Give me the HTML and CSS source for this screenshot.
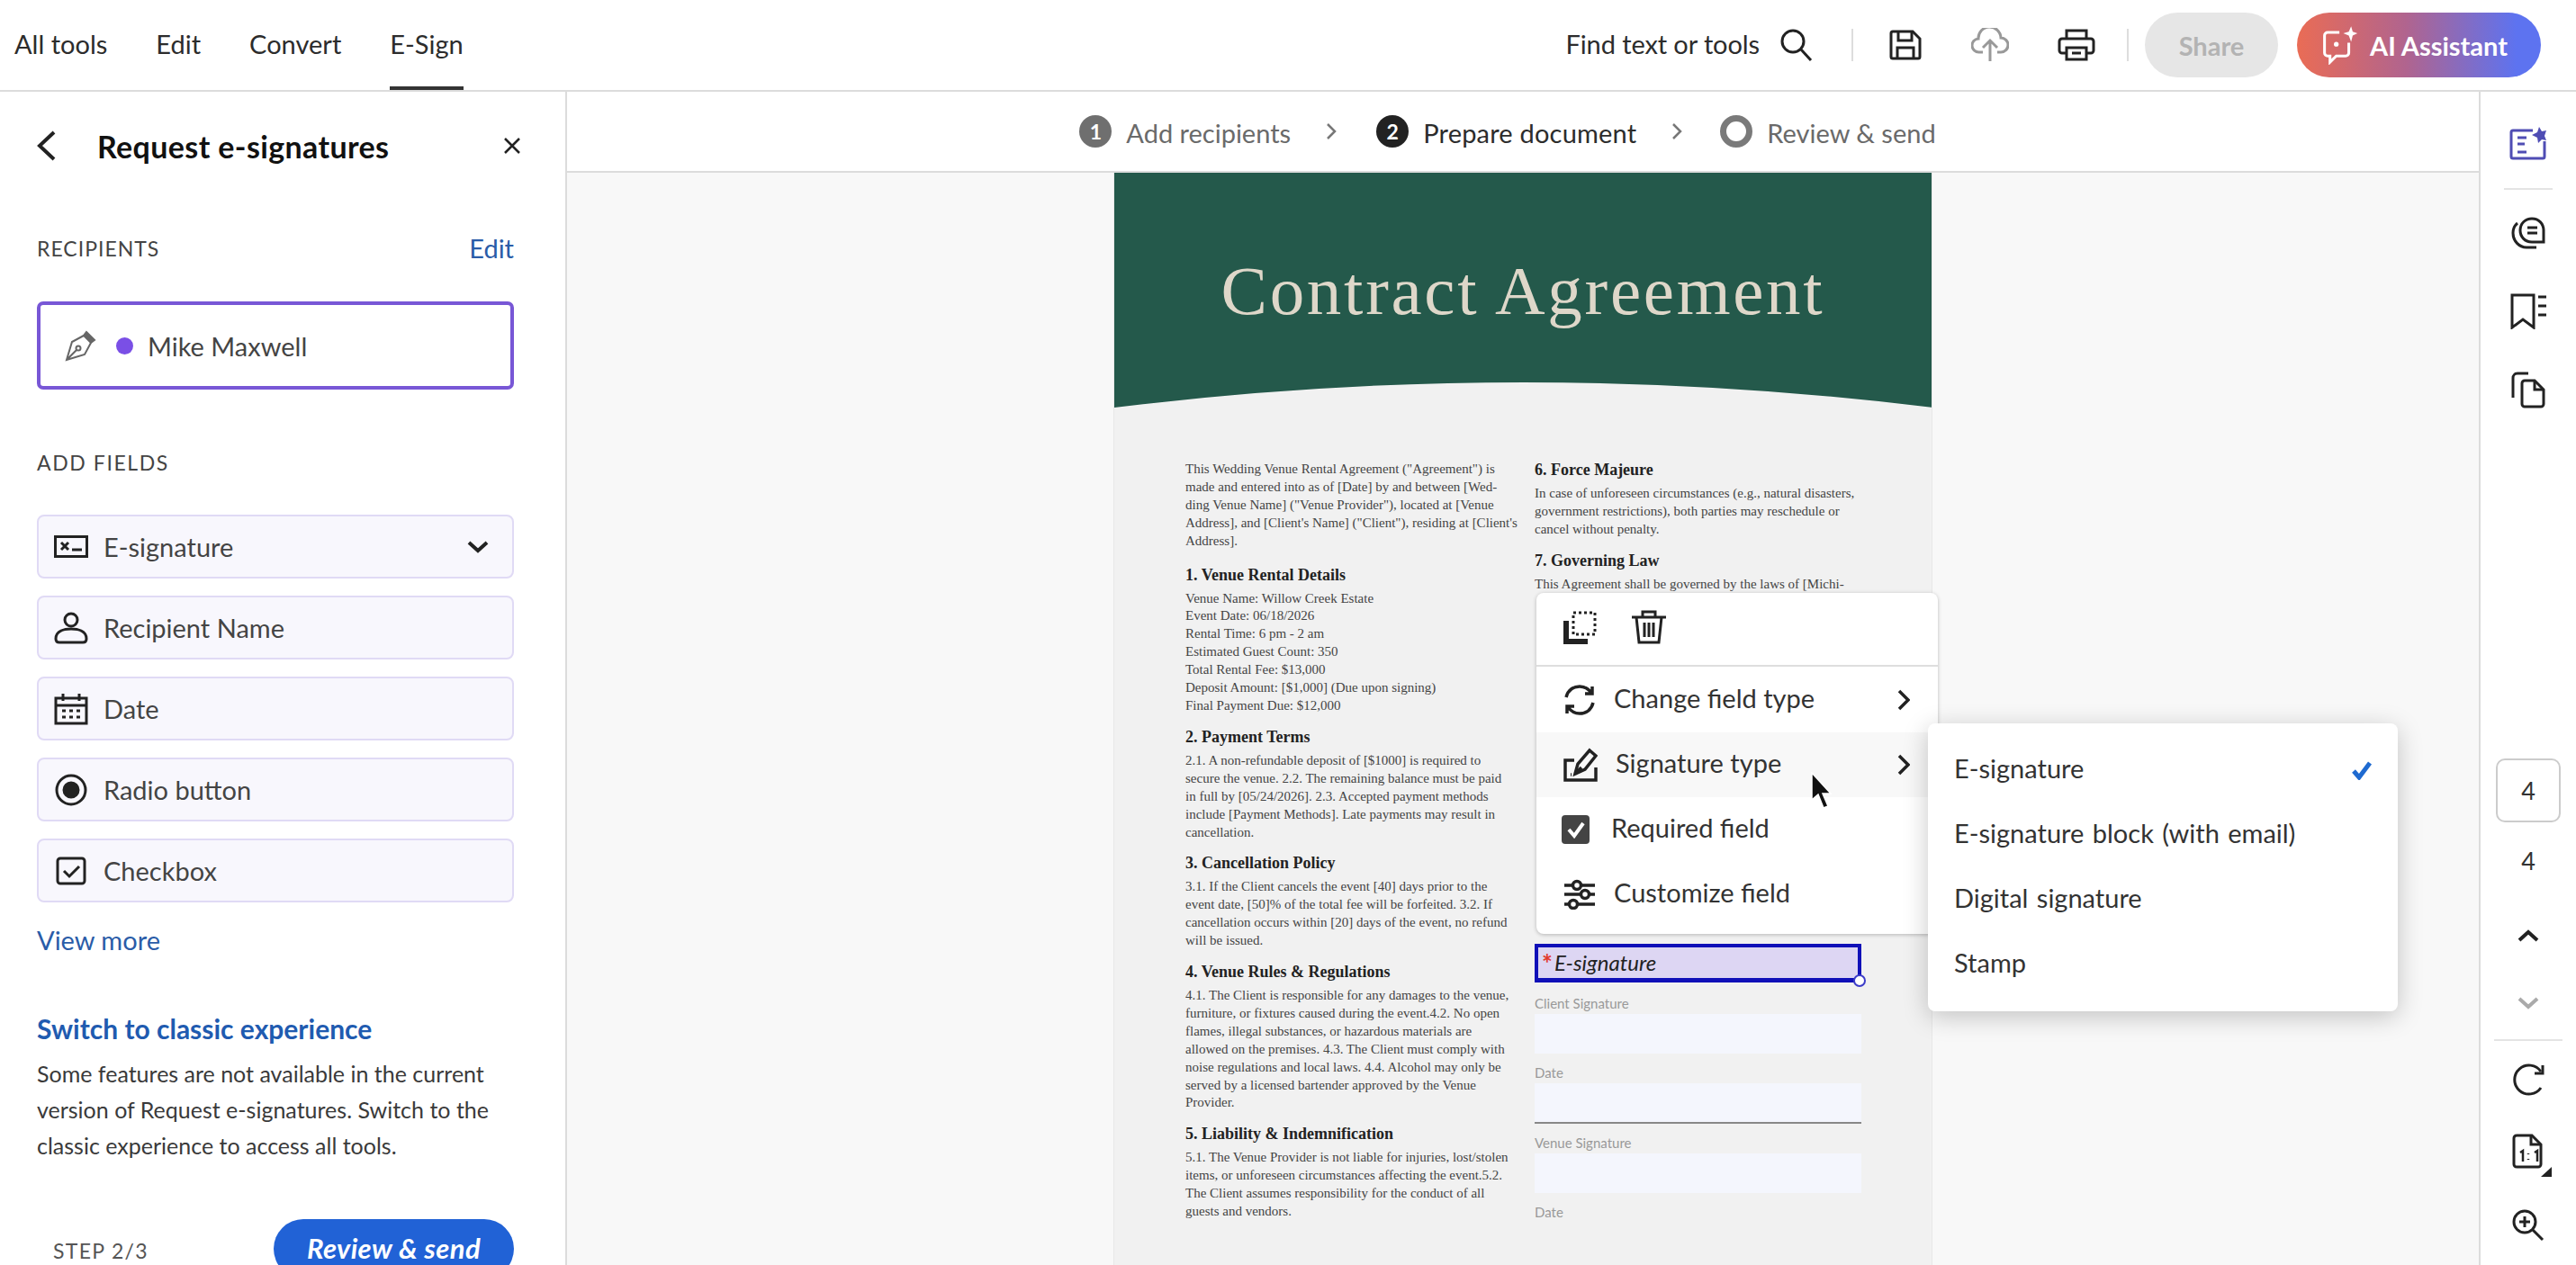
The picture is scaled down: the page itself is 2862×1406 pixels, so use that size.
FILE: index.html
```html
<!DOCTYPE html>
<html lang="en">

<head>
  <meta charset="UTF-8">
  <title>Request e-signatures</title>
  <link rel="stylesheet" href="styles.css">
</head>

<body>
  <!-- Top bar -->
  <header class="topbar">
    <nav class="tabs">
      <a class="tab">All tools</a>
      <a class="tab">Edit</a>
      <a class="tab">Convert</a>
      <a class="tab active">E-Sign</a>
    </nav>
    <div class="actions">
      <span class="find">Find text or tools</span>
      <svg class="ico-search" width="38" height="36" viewBox="0 0 38 36"><circle cx="15" cy="14" r="12"/><path d="M24 23l11 12"/></svg>
      <span class="sep sep-a"></span>
      <svg class="ico-save" width="36" height="34" viewBox="0 0 36 34"><path d="M2 4a2 2 0 0 1 2-2h22l8 8v20a2 2 0 0 1-2 2H4a2 2 0 0 1-2-2z"/><path d="M10 2v10h15V2M9 32V20h18v12"/></svg>
      <svg class="ico-cloud" width="42" height="38" viewBox="0 0 42 38"><path d="M13 27H9a7.500 7.500 0 0 1-1-15 12.500 12.500 0 0 1 25-1 8 8 0 0 1 0 16h-4"/><path d="M21 37V15M13 22l8-8 8 8"/></svg>
      <svg class="ico-print" width="42" height="36" viewBox="0 0 42 36"><path d="M10 11V2h22v9M10 27H5a3 3 0 0 1-3-3V14a3 3 0 0 1 3-3h32a3 3 0 0 1 3 3v10a3 3 0 0 1-3 3h-5"/><path d="M10 21h22v13H10z"/><path d="M16 27h10"/></svg>
      <span class="sep sep-b"></span>
      <button class="btn-share">Share</button>
      <button class="btn-ai">
        <svg width="40" height="44" viewBox="0 0 46 50"><path d="M22 9H7a4 4 0 0 0-4 4v22a4 4 0 0 0 4 4h3v8l8-8h12a4 4 0 0 0 4-4V22"/><circle cx="18" cy="24" r="3" fill="#fff" stroke="none"/><path class="spark" d="M37 1l2 7 6 2-6 3-2 8-3-8-7-3 7-2z"/></svg>
        AI Assistant
      </button>
    </div>
  </header>

  <div class="workspace">
    <!-- Left panel -->
    <aside class="panel">
      <div class="panel-head">
        <svg class="ico-back" width="22" height="36" viewBox="0 0 22 36"><path d="M19 3L3 18l16 15"/></svg>
        <h2>Request e-signatures</h2>
        <svg class="ico-close" width="20" height="20" viewBox="0 0 20 20"><path d="M2 2l16 16M18 2L2 18"/></svg>
      </div>

      <div class="label-row">
        <span class="label">RECIPIENTS</span>
        <a class="link edit">Edit</a>
      </div>
      <div class="recipient">
        <svg width="36" height="36" viewBox="0 0 36 36"><path d="M24 3l9 9-4 3-8-8z" fill="#666"/><path d="M21 7L8 14 2 34l20-6 7-13M2 34l11-11"/><circle cx="15" cy="21" r="2.500"/></svg>
        <span class="dot"></span>
        <span>Mike Maxwell</span>
      </div>

      <div class="label label-fields">ADD FIELDS</div>
      <ul class="fields">
        <li>
          <svg width="38" height="26" viewBox="0 0 38 26"><path d="M1.500 1.500h35v22h-35z"/><path d="M8 8l8 8M16 8l-8 8M20 16h11"/></svg>
          E-signature
          <svg class="field-chevron" width="24" height="14" viewBox="0 0 24 14"><path d="M2 2l10 9 10-9"/></svg>
        </li>
        <li>
          <svg width="38" height="36" viewBox="0 0 38 36"><circle cx="19" cy="9" r="7"/><path d="M2 30c0-9 10-11 17-11s17 2 17 11c0 3-2 4-4 4H6c-2 0-4-1-4-4z"/></svg>
          Recipient Name
        </li>
        <li>
          <svg width="38" height="36" viewBox="0 0 38 36"><path d="M2 6h34v28H2zM2 14h34M10 1v8M28 1v8"/><path class="dots" d="M9 20h4M17 20h4M25 20h4M9 27h4M17 27h4M25 27h4"/></svg>
          Date
        </li>
        <li>
          <svg width="38" height="36" viewBox="0 0 38 36"><circle cx="19" cy="18" r="16"/><circle cx="19" cy="18" r="8" fill="#222"/></svg>
          Radio button
        </li>
        <li>
          <svg width="38" height="32" viewBox="0 0 38 32"><rect x="4" y="2" width="30" height="28" rx="3"/><path d="M11 16l6 6 11-11"/></svg>
          Checkbox
        </li>
      </ul>
      <a class="link view-more">View more</a>

      <a class="link switch">Switch to classic experience</a>
      <p class="switch-text">Some features are not available in the current<br>version of Request e-signatures. Switch to the<br>classic experience to access all tools.</p>

      <div class="panel-foot">
        <span class="step">STEP 2/3</span>
        <button class="btn-review">Review &amp; send</button>
      </div>
    </aside>

    <main class="main">
      <!-- Steps -->
      <div class="steps">
        <span class="num">1</span><span class="step-name">Add recipients</span>
        <svg class="step-chev chev-first" width="12" height="20" viewBox="0 0 12 20"><path d="M2 2l8 8-8 8"/></svg>
        <span class="num current">2</span><span class="step-name current">Prepare document</span>
        <svg class="step-chev" width="12" height="20" viewBox="0 0 12 20"><path d="M2 2l8 8-8 8"/></svg>
        <span class="ring"></span><span class="step-name">Review &amp; send</span>
      </div>

      <div class="canvas">
        <article class="doc">
          <div class="doc-head"><h1>Contract Agreement</h1></div>
          <div class="doc-body">
            <div class="col">
              <p class="intro">This Wedding Venue Rental Agreement ("Agreement") is<br>made and entered into as of [Date] by and between [Wed-<br>ding Venue Name] ("Venue Provider"), located at [Venue<br>Address], and [Client's Name] ("Client"), residing at [Client's<br>Address].</p>
              <h3>1. Venue Rental Details</h3>
              <p>Venue Name: Willow Creek Estate<br>Event Date: 06/18/2026<br>Rental Time: 6 pm - 2 am<br>Estimated Guest Count: 350<br>Total Rental Fee: $13,000<br>Deposit Amount: [$1,000] (Due upon signing)<br>Final Payment Due: $12,000</p>
              <h3>2. Payment Terms</h3>
              <p>2.1. A non-refundable deposit of [$1000] is required to<br>secure the venue. 2.2. The remaining balance must be paid<br>in full by [05/24/2026]. 2.3. Accepted payment methods<br>include [Payment Methods]. Late payments may result in<br>cancellation.</p>
              <h3>3. Cancellation Policy</h3>
              <p>3.1. If the Client cancels the event [40] days prior to the<br>event date, [50]% of the total fee will be forfeited. 3.2. If<br>cancellation occurs within [20] days of the event, no refund<br>will be issued.</p>
              <h3>4. Venue Rules &amp; Regulations</h3>
              <p>4.1. The Client is responsible for any damages to the venue,<br>furniture, or fixtures caused during the event.4.2. No open<br>flames, illegal substances, or hazardous materials are<br>allowed on the premises. 4.3. The Client must comply with<br>noise regulations and local laws. 4.4. Alcohol may only be<br>served by a licensed bartender approved by the Venue<br>Provider.</p>
              <h3>5. Liability &amp; Indemnification</h3>
              <p>5.1. The Venue Provider is not liable for injuries, lost/stolen<br>items, or unforeseen circumstances affecting the event.5.2.<br>The Client assumes responsibility for the conduct of all<br>guests and vendors.</p>
            </div>
            <div class="col col-right">
              <h3 class="first">6. Force Majeure</h3>
              <p>In case of unforeseen circumstances (e.g., natural disasters,<br>government restrictions), both parties may reschedule or<br>cancel without penalty.</p>
              <h3>7. Governing Law</h3>
              <p>This Agreement shall be governed by the laws of [Michi-</p>

              <div class="sign-field"><span class="req">*</span>E-signature<span class="handle"></span></div>
              <div class="sign-label first-label">Client Signature</div>
              <div class="sign-input"></div>
              <div class="sign-label">Date</div>
              <div class="sign-input lined"></div>
              <div class="sign-label">Venue Signature</div>
              <div class="sign-input"></div>
              <div class="sign-label">Date</div>
            </div>
          </div>
        </article>

        <!-- Field context menu -->
        <div class="menu">
          <div class="menu-tools">
            <svg width="38" height="38" viewBox="0 0 38 38"><path class="thick" d="M4 12v23h24"/><path class="dashed" d="M12 3h24v24H12z"/></svg>
            <svg width="42" height="38" viewBox="0 0 42 38"><path d="M2 8h38M14 8V2h14v6M7 8l3 28h22l3-28M16 14v16M21 14v16M26 14v16"/></svg>
          </div>
          <div class="menu-list">
            <div class="menu-item">
              <svg width="36" height="34" viewBox="0 0 36 34"><path d="M3 14C5 6 11 2 18 2c6 0 10 3 13 7M32 2v8h-8M33 20c-2 8-8 12-15 12-6 0-10-3-13-7M4 32v-8h8"/></svg>
              <span class="menu-text">Change field type</span>
              <svg class="menu-chev" width="14" height="24" viewBox="0 0 14 24"><path d="M2 2l10 10L2 22"/></svg>
            </div>
            <div class="menu-item hover">
              <svg width="38" height="38" viewBox="0 0 38 38"><path d="M12 14H2v22h34V22"/><path d="M13 29l3-11L29 3l7 6-12 15z"/><path d="M13 29l7-7M8 30h1"/></svg>
              <span class="menu-text">Signature type</span>
              <svg class="menu-chev" width="14" height="24" viewBox="0 0 14 24"><path d="M2 2l10 10L2 22"/></svg>
            </div>
            <div class="menu-item check-item">
              <span class="check-box"><svg width="22" height="20" viewBox="0 0 22 20"><path d="M3 10l6 7L19 3"/></svg></span>
              <span class="menu-text">Required field</span>
            </div>
            <div class="menu-item">
              <svg width="36" height="34" viewBox="0 0 36 34"><path d="M1 7h9M20 7h15M1 17h18M29 17h6M1 28h5M16 28h19"/><circle cx="15" cy="7" r="4.500"/><circle cx="24" cy="17" r="4.500"/><circle cx="11" cy="28" r="4.500"/></svg>
              <span class="menu-text">Customize field</span>
            </div>
          </div>
        </div>

        <div class="submenu">
          <div class="sub-item"><span class="menu-text">E-signature</span><svg width="24" height="22" viewBox="0 0 24 22"><path d="M3 12l6 7L21 3"/></svg></div>
          <div class="sub-item"><span class="menu-text">E-signature block (with email)</span></div>
          <div class="sub-item"><span class="menu-text">Digital signature</span></div>
          <div class="sub-item"><span class="menu-text">Stamp</span></div>
        </div>

        <svg class="cursor" width="24" height="42" viewBox="0 0 24 42"><path d="M1 1v30l7-6 6 15 5-2-6-14h9z"/></svg>
      </div>
    </main>

    <!-- Right rail -->
    <aside class="rail">
      <svg class="r-ai" width="42" height="38" viewBox="0 0 42 38"><path d="M26 5H4a2 2 0 0 0-2 2v27a2 2 0 0 0 2 2h33a2 2 0 0 0 2-2V17"/><path d="M9 13h10M9 20h8M9 29h10"/><path class="spark" d="M33 1l3 5 5-1-2 6 2 5-5-1-4 4-1-6-6-3 6-3z"/></svg>
      <span class="rail-line top-line"></span>
      <svg class="r-comments" width="38" height="36" viewBox="0 0 38 36"><path d="M10 15c0-8 6-13 13-13 8 0 13 6 13 13v13H23c-8 0-13-6-13-13zM18 12h11M18 18h11"/><path d="M7 7C3 10 2 14 2 18c0 9 7 16 15 16h11"/></svg>
      <svg class="r-bookmark" width="42" height="40" viewBox="0 0 42 40"><path d="M3 2h24v36L15 29 3 38z"/><path d="M32 4h9M32 14h9M32 24h9"/></svg>
      <svg class="r-pages" width="38" height="41" viewBox="0 0 38 41"><path d="M19 2H7a5 5 0 0 0-5 5v22"/><path d="M12 13a3 3 0 0 1 3-3h11l10 10v16a3 3 0 0 1-3 3H15a3 3 0 0 1-3-3z"/><path d="M26 10v10h10"/></svg>
      <div class="page-box">4</div>
      <div class="page-total">4</div>
      <svg class="r-up" width="24" height="16" viewBox="0 0 24 16"><path d="M2 13L12 4l10 9"/></svg>
      <svg class="r-down" width="24" height="16" viewBox="0 0 24 16"><path d="M2 3l10 9 10-9"/></svg>
      <span class="rail-line bottom-line"></span>
      <svg class="r-rotate" width="36" height="36" viewBox="0 0 36 36"><path d="M32 27a16 16 0 1 1 0-18"/><path d="M34 2v9h-9"/></svg>
      <div class="r-fit">
        <svg width="46" height="48" viewBox="0 0 46 48"><path d="M5 2h17l10 10v22a3 3 0 0 1-3 3H5a3 3 0 0 1-3-3V5a3 3 0 0 1 3-3z"/><path d="M21 2v10h10"/><path class="fit-txt" d="M9 21l3-2v12M25 21l3-2v12M18 22v1M18 28v1"/><path class="tri" d="M44 37v11H32z"/></svg>
      </div>
      <svg class="r-zoom" width="36" height="36" viewBox="0 0 36 36"><circle cx="14" cy="14" r="12"/><path d="M8 14h12M14 8v12M23 23l11 11"/></svg>
    </aside>
  </div>
</body>

</html>
```
FILE: styles.css
```css
* {
  margin: 0;
  padding: 0;
  box-sizing: border-box;
}

html,
body {
  width: 2862px;
  height: 1406px;
  overflow: hidden;
}

body {
  font-family: 'Lato', 'Open Sans', sans-serif;
  font-size: 29px;
  color: #333;
  background: #fff;
}

svg {
  fill: none;
  stroke: #222;
  stroke-width: 3;
  flex-shrink: 0;
}

button {
  border: none;
  font-family: inherit;
}

/* Top bar */
.topbar {
  height: 102px;
  display: flex;
  align-items: center;
  justify-content: space-between;
  border-bottom: 2px solid #dcdcdc;
  padding: 0 39px 0 16px;
}

.tabs {
  display: flex;
  gap: 54px;
  height: 100px;
}

.tab {
  display: flex;
  align-items: center;
  color: #2c2c2c;
  font-size: 29px;
  border-bottom: 4px solid transparent;
}

.tab.active {
  border-bottom-color: #333;
}

.actions {
  display: flex;
  align-items: center;
}

.find {
  color: #2c2c2c;
  margin-right: 22px;
  padding-bottom: 3px;
  letter-spacing: -0.100px;
}

.sep {
  width: 2px;
  height: 36px;
  background: #ddd;
}

.sep-a {
  margin: 0 40px 0 42px;
}

.sep-b {
  margin: 0 18px 0 35px;
}

.ico-cloud {
  stroke: #999;
  margin: 0 54px 0 55px;
}

.btn-share,
.btn-ai {
  height: 72px;
  border-radius: 36px;
  font-size: 29px;
  font-weight: 700;
}

.btn-share {
  width: 148px;
  background: #e6e6e6;
  color: #b3b3b3;
}

.btn-ai {
  width: 271px;
  margin-left: 21px;
  display: flex;
  align-items: center;
  padding-left: 28px;
  gap: 13px;
  color: #fff;
  background: linear-gradient(90deg, #ea6c55 0%, #b0648f 45%, #5d73f0 90%);
}

.btn-ai svg {
  stroke: #fff;
  stroke-width: 3.500;
}

.spark {
  fill: currentColor;
  stroke: none;
}

.btn-ai .spark {
  fill: #fff;
  stroke: none;
}

/* Layout */
.workspace {
  display: flex;
  height: 1304px;
}

.panel {
  width: 630px;
  flex-shrink: 0;
  border-right: 2px solid #dcdcdc;
  padding: 0 57px 0 41px;
  overflow: hidden;
}

.panel-head {
  height: 120px;
  display: flex;
  align-items: center;
}

.panel-head h2 {
  font-size: 34px;
  font-weight: 700;
  letter-spacing: 0.370px;
  color: #111;
  margin-left: 45px;
}

.ico-back {
  stroke-width: 4;
}

.ico-close {
  margin-left: auto;
  margin-right: -8px;
  stroke-width: 2.500;
}

.label-row {
  display: flex;
  justify-content: space-between;
  align-items: center;
  height: 36px;
  margin-top: 36px;
  margin-bottom: 41px;
}

.label {
  font-size: 23px;
  letter-spacing: 1px;
  color: #444;
}

.link {
  color: #2a5ca8;
}

.edit {
  padding-bottom: 2px;
}

.recipient {
  height: 98px;
  border: 4px solid #7857d6;
  border-radius: 7px;
  display: flex;
  align-items: center;
  padding-left: 27px;
  color: #444;
}

.recipient svg {
  stroke: #666;
  stroke-width: 2;
}

.dot {
  width: 19px;
  height: 19px;
  border-radius: 50%;
  background: #7a4fe6;
  margin: 0 16px 0 21px;
}

.label-fields {
  height: 30px;
  line-height: 30px;
  margin-top: 66px;
  letter-spacing: 1.600px;
}

.fields {
  list-style: none;
  margin-top: 43px;
  display: flex;
  flex-direction: column;
  gap: 19px;
}

.fields li {
  height: 71px;
  display: flex;
  align-items: center;
  gap: 17px;
  padding-left: 17px;
  padding-right: 26px;
  background: #f8f7fd;
  border: 2px solid #e0daf5;
  border-radius: 8px;
  color: #444;
}

.fields svg {
  stroke-width: 3;
}

.fields .field-chevron {
  margin-left: auto;
  stroke-width: 4;
}

.dots {
  stroke-width: 3;
}

.view-more {
  display: block;
  height: 40px;
  line-height: 40px;
  margin-top: 22px;
}

.switch {
  display: block;
  height: 40px;
  line-height: 40px;
  margin-top: 58px;
  font-size: 30px;
  font-weight: 700;
  color: #1f5bb0;
}

.switch-text {
  margin-top: 10px;
  font-size: 25px;
  line-height: 40px;
  white-space: nowrap;
  color: #3a3a3a;
}

.panel-foot {
  display: flex;
  justify-content: space-between;
  align-items: center;
  margin-top: 62px;
  padding-left: 18px;
}

.step {
  font-size: 23px;
  letter-spacing: 1.300px;
  color: #555;
  padding-top: 4px;
}

.btn-review {
  width: 267px;
  height: 66px;
  border-radius: 33px;
  background: #2162d6;
  color: #fff;
  font-size: 31px;
  letter-spacing: 0.400px;
  font-weight: 700;
  font-style: italic;
  padding-bottom: 3px;
}

/* Steps */
.main {
  flex: 1;
  min-width: 0;
  display: flex;
  flex-direction: column;
}

.steps {
  height: 90px;
  flex-shrink: 0;
  display: flex;
  align-items: center;
  justify-content: center;
  padding-right: 34px;
  border-bottom: 2px solid #dcdcdc;
  color: #6a6a6a;
}

.num,
.ring {
  width: 36px;
  height: 36px;
  border-radius: 50%;
  display: flex;
  align-items: center;
  justify-content: center;
  font-size: 23px;
  font-weight: 700;
  color: #fff;
  background: #6f6f6f;
}

.num.current {
  background: #222;
}

.ring {
  background: none;
  border: 7px solid #7a7a7a;
}

.step-name {
  margin-left: 16px;
  padding-top: 2px;
}

.step-name.current {
  color: #2c2c2c;
  letter-spacing: 0.200px;
}

.step-chev {
  stroke: #777;
  stroke-width: 2.500;
  margin: 0 42px 0 39px;
}

.step-chev.chev-first {
  margin-right: 44px;
}

/* Document */
.canvas {
  flex: 1;
  position: relative;
  background: #f8f8f8;
  overflow: hidden;
  display: flex;
  justify-content: center;
}

.doc {
  width: 910px;
  height: 1300px;
  background: #f1f1f1;
  font-family: 'Liberation Serif', serif;
  border-left: 1px solid #e8e8e8;
  border-right: 1px solid #e8e8e8;
}

.doc-head {
  height: 261px;
  background: #24594b;
  clip-path: path('M0 0H910V261Q455 205 0 261Z');
  display: flex;
  justify-content: center;
  padding-top: 88px;
}

.doc-head h1 {
  font-size: 77px;
  line-height: 86px;
  font-weight: 400;
  letter-spacing: 2.700px;
  color: #ded7c9;
}

.doc-body {
  display: grid;
  grid-template-columns: 356px 363px;
  column-gap: 32px;
  padding: 59px 0 0 79px;
}

.doc-body p {
  font-size: 15px;
  line-height: 19.900px;
  color: #444;
  white-space: nowrap;
  margin-bottom: 12px;
}

.doc-body p.intro {
  margin-bottom: 15px;
}

.doc-body h3 {
  font-size: 18px;
  line-height: 24px;
  font-weight: 700;
  color: #222;
  margin-bottom: 5px;
}

.col-right {
  margin-top: -2px;
}

.sign-field {
  position: relative;
  height: 43px;
  margin-top: 389px;
  display: flex;
  align-items: center;
  padding-left: 4px;
  background: #ddd6f3;
  border: 4px solid #1010b8;
  border-bottom-width: 5px;
  font-family: 'Lato', sans-serif;
  font-size: 24px;
  font-style: italic;
  color: #222;
}

.req {
  color: #e23b2e;
  font-size: 28px;
  font-weight: 700;
  font-style: normal;
  margin-right: 2px;
}

.handle {
  position: absolute;
  right: -9px;
  bottom: -10px;
  width: 14px;
  height: 14px;
  border-radius: 50%;
  background: #fff;
  border: 2px solid #3c3cc8;
}

.sign-label {
  font-family: 'Lato', sans-serif;
  font-size: 15px;
  line-height: 20px;
  color: #999;
  margin-top: 11px;
}

.sign-label.first-label {
  margin-top: 13px;
}

.sign-input {
  height: 44.500px;
  margin-top: 2px;
  background: #f4f6fd;
}

.sign-input.lined {
  border-bottom: 2px solid #888;
}

/* Menus */
.menu {
  position: absolute;
  left: 1077px;
  top: 467px;
  width: 446px;
  height: 379px;
  background: #fff;
  border-radius: 8px;
  box-shadow: 0 1px 4px rgba(0, 0, 0, 0.25);
}

.menu-tools {
  height: 82px;
  display: flex;
  align-items: center;
  gap: 37px;
  padding: 0 0 4px 29px;
  border-bottom: 2px solid #dedede;
}

.menu-tools .thick {
  stroke-width: 6;
}

.menu-tools .dashed {
  stroke-width: 3;
  stroke-dasharray: 3 3;
}

.menu-list {
  padding-top: 1px;
}

.menu-item {
  height: 72px;
  display: flex;
  align-items: center;
  gap: 20px;
  padding: 0 31px 0 30px;
  color: #333;
}

.menu-item svg {
  stroke-width: 3.500;
}

.menu-text {
  padding-bottom: 5px;
}

.menu-item.hover {
  background: #f8f8f8;
}

.menu-chev {
  margin-left: auto;
}

.check-item {
  gap: 24px;
  padding-left: 28px;
}

.check-box {
  width: 31px;
  height: 32px;
  border-radius: 4px;
  background: #444;
  display: flex;
  align-items: center;
  justify-content: center;
}

.check-box svg {
  stroke: #fff;
  stroke-width: 4;
}

.submenu {
  position: absolute;
  left: 1512px;
  top: 612px;
  width: 522px;
  height: 320px;
  padding-top: 16px;
  background: #fff;
  border-radius: 8px;
  box-shadow: 0 6px 28px rgba(0, 0, 0, 0.22);
}

.sub-item {
  height: 72px;
  display: flex;
  align-items: center;
  justify-content: space-between;
  padding: 0 28px 0 29px;
  color: #333;
  word-spacing: 2px;
}

.sub-item svg {
  stroke: #1f6ad0;
  stroke-width: 5;
}

.cursor {
  position: absolute;
  left: 1382px;
  top: 666px;
  fill: #111;
  stroke: #fff;
  stroke-width: 1.500;
}

/* Right rail */
.rail {
  width: 108px;
  flex-shrink: 0;
  border-left: 2px solid #dcdcdc;
  display: flex;
  flex-direction: column;
  align-items: center;
  padding-top: 38px;
}

.r-ai {
  stroke: #4f4db4;
  height: 38px;
  color: #4f4db4;
}

.rail-line {
  height: 2px;
  background: #e4e4e4;
}

.top-line {
  width: 54px;
  margin-top: 31px;
}

.r-comments {
  margin-top: 30px;
}

.r-bookmark {
  margin-top: 49px;
}

.r-pages {
  margin-top: 47px;
}

.page-box {
  width: 72px;
  height: 71px;
  margin-top: 389px;
  border: 2px solid #ccc;
  border-radius: 10px;
  display: flex;
  align-items: center;
  justify-content: center;
  font-size: 27px;
  color: #333;
}

.page-total {
  height: 30px;
  line-height: 30px;
  margin-top: 28px;
  font-size: 27px;
  color: #333;
}

.r-up {
  margin-top: 60px;
  stroke-width: 4;
}

.r-down {
  margin-top: 59px;
  stroke: #aaa;
  stroke-width: 4;
}

.bottom-line {
  width: 76px;
  margin-top: 32px;
}

.r-rotate {
  margin-top: 25px;
}

.r-fit {
  height: 37px;
  margin-top: 42px;
  padding-left: 10px;
}

.r-fit svg {
  display: block;
}

.fit-txt {
  stroke-width: 2.500;
}

.tri {
  fill: #222;
  stroke: none;
}

.r-zoom {
  margin-top: 47px;
}
```
